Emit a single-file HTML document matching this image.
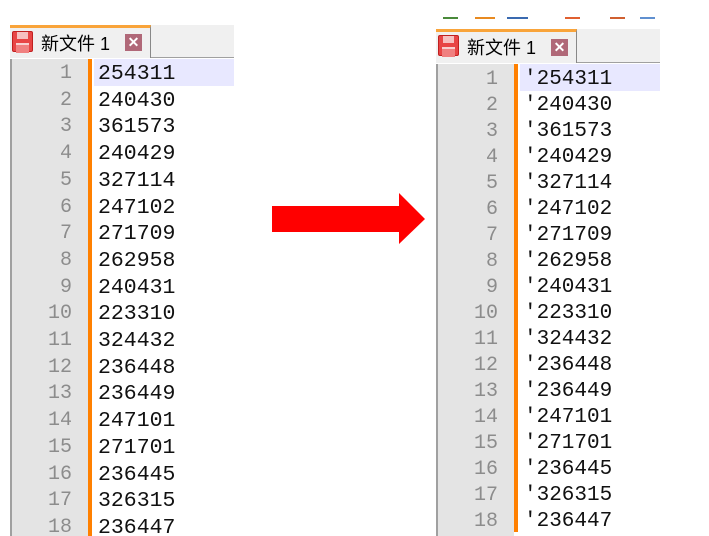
<!DOCTYPE html>
<html><head><meta charset="utf-8"><style>
*{margin:0;padding:0;box-sizing:border-box}
body{width:709px;height:536px;background:#fff;position:relative;overflow:hidden;font-family:"Liberation Sans","Noto Sans CJK SC",sans-serif}
.p{position:absolute;overflow:hidden;background:#fff}
.bar{position:absolute;left:0;right:0;top:0;background:#f0f0f0;border-bottom:1px solid #a0a0a0}
.tab{position:absolute;left:0;top:0;background:#f0f0f0;border-top:3px solid #f9a43a;border-right:1px solid #888}
.tab .t{position:absolute;left:31px;top:2px;font-size:18px;color:#000}
.disk{position:absolute;left:2px;top:3px;width:21px;height:21px;background:#e84545;border:1px solid #c02020;border-radius:2px}
.disk:before{content:"";position:absolute;left:4px;top:0;width:11px;height:7px;background:#f6c0c0}
.disk:after{content:"";position:absolute;left:3px;top:11px;width:13px;height:8px;background:#f08080;border-top:2px solid #f8d0d0}
.x{position:absolute;width:17px;height:17px;background:#b06878;color:#fff;font-size:14px;font-weight:bold;text-align:center;line-height:17px}
.ed{position:absolute;left:0;right:0;bottom:0;border-left:2px solid #a0a0a0}
.g{position:absolute;left:0;top:0;bottom:0;width:76px;background:#e4e4e4}
.o{position:absolute;top:0;bottom:0;width:4px;background:#ff8000}
.hl{position:absolute;right:0;background:#e8e8ff}
.ln{position:absolute;left:0;width:60px;text-align:right;color:#8c8c8c;font-family:"Liberation Mono","DejaVu Sans Mono",monospace;white-space:pre}
.tx{position:absolute;color:#111;font-family:"Liberation Mono","DejaVu Sans Mono",monospace;white-space:pre}
</style></head><body>

<div class="p" style="left:10px;top:25px;width:224px;height:511px">
 <div class="bar" style="height:33px"></div>
 <div class="tab" style="width:141px;height:33px"><div class="disk"></div><div class="t">新文件 1</div><div class="x" style="left:115px;top:6px">✕</div></div>
 <div class="ed" style="top:34px">
  <div class="g"></div><div class="o" style="left:76px"></div>
  <div class="hl" style="left:82px;top:0;height:27px"></div>
  <div class="ln" style="top:2px;font-size:20px;line-height:26.7px">1
2
3
4
5
6
7
8
9
10
11
12
13
14
15
16
17
18</div>
  <div class="tx" style="left:86px;top:2px;font-size:21.5px;line-height:26.7px">254311
240430
361573
240429
327114
247102
271709
262958
240431
223310
324432
236448
236449
247101
271701
236445
326315
236447</div>
 </div>
</div>

<svg style="position:absolute;left:0;top:0" width="709" height="536"><polygon points="272,206 399,206 399,193 425,219 399,244 399,232 272,232" fill="#ff0000"/></svg>

<div style="position:absolute;left:440px;top:17px;width:220px;height:2px;background:linear-gradient(90deg,transparent 3px,#4a8a3a 3px,#4a8a3a 18px,transparent 18px,transparent 35px,#e88a20 35px,#e88a20 55px,transparent 55px,transparent 67px,#3a6ab0 67px,#3a6ab0 88px,transparent 88px,transparent 125px,#e06030 125px,#e06030 140px,transparent 140px,transparent 170px,#d06030 170px,#d06030 185px,transparent 185px,transparent 200px,#6090d0 200px,#6090d0 215px,transparent 215px)"></div>
<div class="p" style="left:436px;top:29px;width:224px;height:507px">
 <div class="bar" style="height:34px"></div>
 <div class="tab" style="width:141px;height:34px"><div class="disk"></div><div class="t">新文件 1</div><div class="x" style="left:115px;top:7px">✕</div></div>
 <div class="ed" style="top:35px">
  <div class="g"></div><div class="o" style="left:76px;bottom:4px"></div>
  <div class="hl" style="left:82px;top:0;height:27px"></div>
  <div class="ln" style="top:3px;font-size:20px;line-height:26px">1
2
3
4
5
6
7
8
9
10
11
12
13
14
15
16
17
18</div>
  <div class="tx" style="left:86px;top:3px;font-size:21px;line-height:26px">'254311
'240430
'361573
'240429
'327114
'247102
'271709
'262958
'240431
'223310
'324432
'236448
'236449
'247101
'271701
'236445
'326315
'236447</div>
 </div>
</div>
</body></html>
